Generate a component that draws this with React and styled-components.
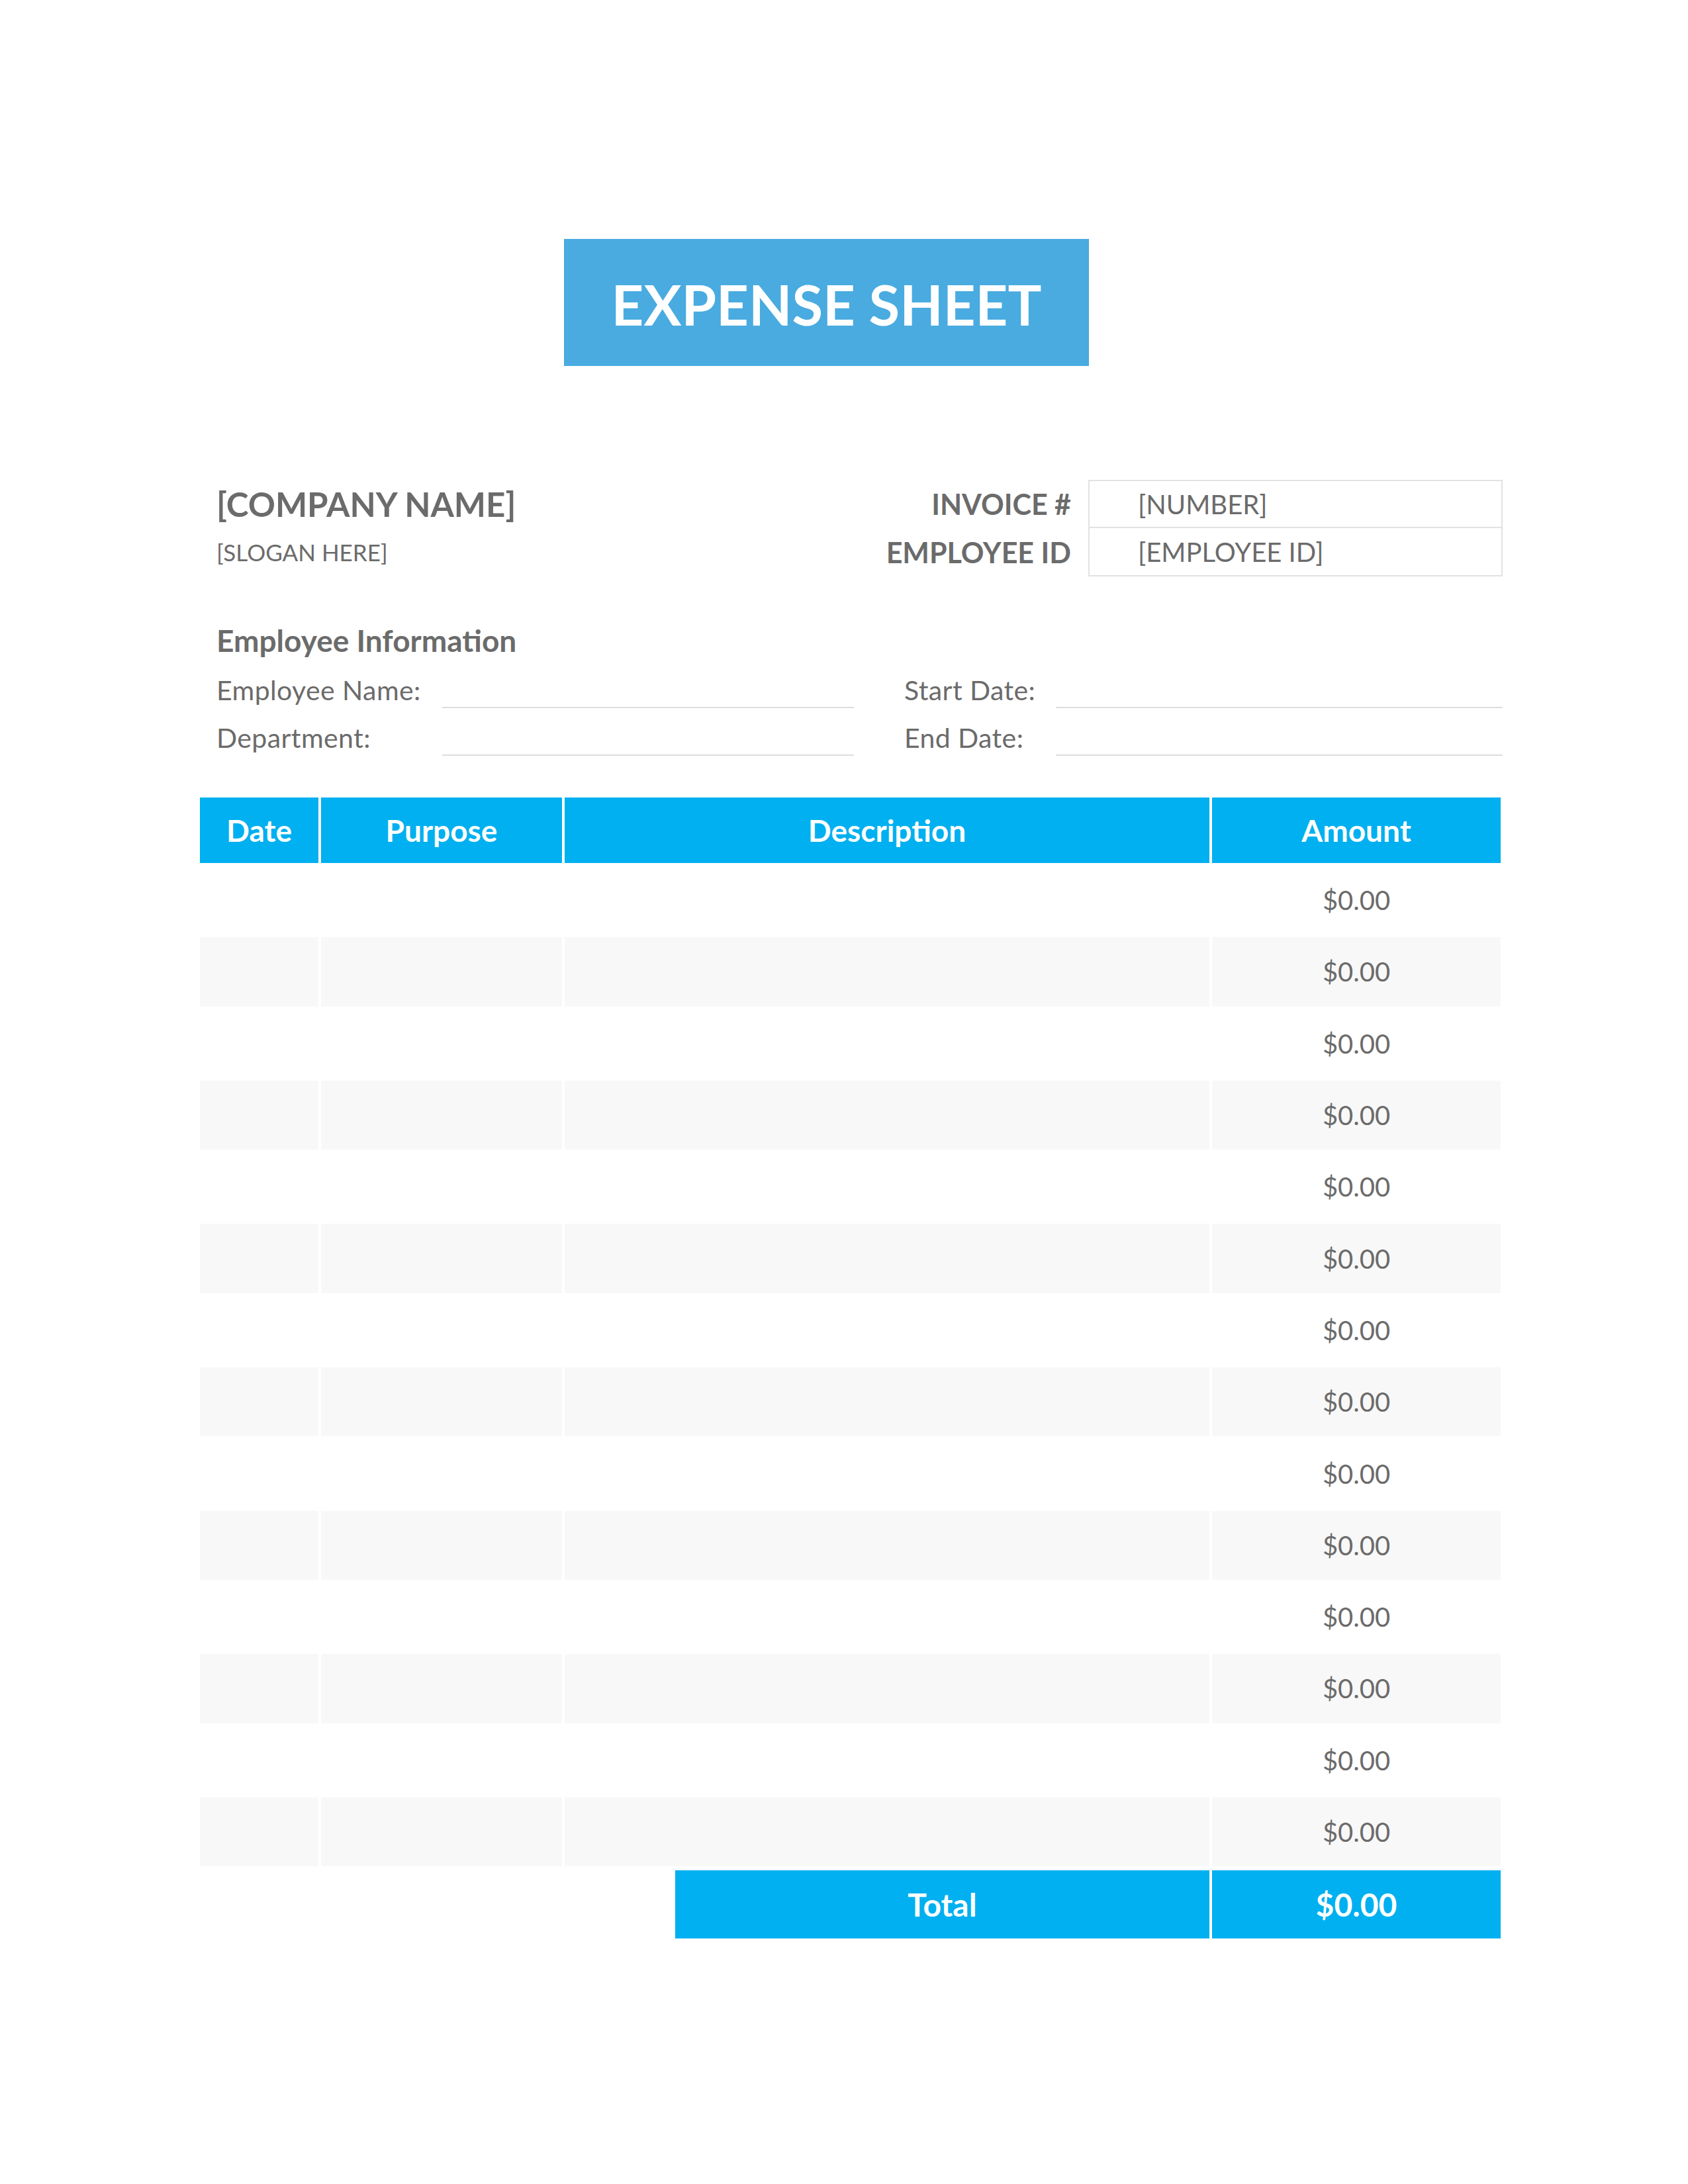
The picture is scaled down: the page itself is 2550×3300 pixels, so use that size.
import styled, { createGlobalStyle } from "styled-components";

const GlobalStyle = createGlobalStyle`
  body {
    margin: 0;
    background: #ffffff;
    font-family: "Lato", "Open Sans", sans-serif;
    color: #6b6b6b;
  }
`;

const ROWS = 14;

const App = () => {
  return (
    <Page>
      <GlobalStyle />
      <TitleBox>
        <Title>EXPENSE SHEET</Title>
      </TitleBox>

      <HeaderGrid>
        <CompanyName>[COMPANY NAME]</CompanyName>
        <MetaLabel>INVOICE #</MetaLabel>
        <MetaValue>[NUMBER]</MetaValue>
        <Slogan>[SLOGAN HERE]</Slogan>
        <MetaLabel>EMPLOYEE ID</MetaLabel>
        <MetaValue second>[EMPLOYEE ID]</MetaValue>
      </HeaderGrid>

      <InfoSection>
        <SectionTitle>Employee Information</SectionTitle>
        <FieldGrid>
          <FieldRow labelWidth={341}>
            <FieldLabel>Employee Name:</FieldLabel>
            <FieldLine />
          </FieldRow>
          <FieldRow labelWidth={229}>
            <FieldLabel>Start Date:</FieldLabel>
            <FieldLine />
          </FieldRow>
          <FieldRow labelWidth={341}>
            <FieldLabel>Department:</FieldLabel>
            <FieldLine />
          </FieldRow>
          <FieldRow labelWidth={229}>
            <FieldLabel>End Date:</FieldLabel>
            <FieldLine />
          </FieldRow>
        </FieldGrid>
      </InfoSection>

      <Table>
        <HeadCell>Date</HeadCell>
        <HeadCell>Purpose</HeadCell>
        <HeadCell>Description</HeadCell>
        <HeadCell>Amount</HeadCell>
        {Array.from({ length: ROWS }).map((_, i) => (
          <Row key={i} striped={i % 2 === 1}>
            <Cell />
            <Cell />
            <Cell />
            <Cell>$0.00</Cell>
          </Row>
        ))}
      </Table>

      <TotalRow>
        <span />
        <TotalCell>Total</TotalCell>
        <TotalCell>$0.00</TotalCell>
      </TotalRow>
    </Page>
  );
};
export default App;

const Page = styled.div`
  width: 1968px;
  min-height: 2939px;
  padding: 361px 0 0 302px;
`;

const TitleBox = styled.div`
  width: 793px;
  height: 192px;
  margin-left: 550px;
  background: #49abe0;
  display: flex;
  align-items: center;
  justify-content: center;
`;

const Title = styled.h1`
  margin: 0;
  color: #ffffff;
  font-size: 85px;
  font-weight: 700;
  line-height: 1;
  padding-top: 4px;
`;

const HeaderGrid = styled.div`
  margin-top: 172px;
  display: grid;
  grid-template-columns: 1fr auto 626px;
  grid-template-rows: 73px 73px;
  column-gap: 26px;
  align-items: center;
`;

const CompanyName = styled.div`
  padding-left: 25px;
  font-size: 51px;
  font-weight: 700;
  line-height: 73px;
`;

const Slogan = styled.div`
  padding-left: 25px;
  font-size: 35px;
  line-height: 73px;
`;

const MetaLabel = styled.div`
  text-align: right;
  font-size: 43px;
  font-weight: 700;
  line-height: 73px;
`;

const MetaValue = styled.div`
  height: 100%;
  box-sizing: border-box;
  border: 2px solid #e2e2e2;
  border-top-width: ${(p) => (p.second ? "0" : "2px")};
  padding-left: 73px;
  font-size: 40px;
  display: flex;
  align-items: center;
`;

const InfoSection = styled.div`
  margin-top: 60px;
  padding-left: 25px;
`;

const SectionTitle = styled.h2`
  margin: 0;
  font-size: 46px;
  font-weight: 700;
  line-height: 74px;
`;

const FieldGrid = styled.div`
  display: grid;
  grid-template-columns: 963px 904px;
  column-gap: 76px;
`;

const FieldRow = styled.div`
  height: 72px;
  display: grid;
  grid-template-columns: ${(p) => p.labelWidth}px 1fr;
`;

const FieldLabel = styled.div`
  font-size: 41px;
  line-height: 68px;
  padding-top: 4px;
  letter-spacing: 0.4px;
`;

const FieldLine = styled.div`
  align-self: end;
  margin-bottom: 7px;
  border-bottom: 2px solid #dddddd;
`;

const Table = styled.div`
  margin-top: 56px;
  display: grid;
  grid-template-columns: 179px 364px 974px 436px;
  grid-template-rows: 99px;
  grid-auto-rows: 104.3px;
  gap: 4px;
`;

const HeadCell = styled.div`
  background: #00b0f0;
  color: #ffffff;
  font-size: 46px;
  font-weight: 700;
  display: flex;
  align-items: center;
  justify-content: center;
`;

const Row = styled.div`
  display: contents;
  & > div {
    background: ${(p) => (p.striped ? "#f8f8f8" : "#ffffff")};
  }
`;

const Cell = styled.div`
  font-size: 40px;
  display: flex;
  align-items: center;
  justify-content: center;
`;

const TotalRow = styled.div`
  margin-top: 6px;
  display: grid;
  grid-template-columns: 1fr 807px 436px;
  column-gap: 4px;
  height: 103px;
  width: 1965px;
`;

const TotalCell = styled.div`
  background: #00b0f0;
  color: #ffffff;
  font-size: 48px;
  font-weight: 700;
  display: flex;
  align-items: center;
  justify-content: center;
`;
